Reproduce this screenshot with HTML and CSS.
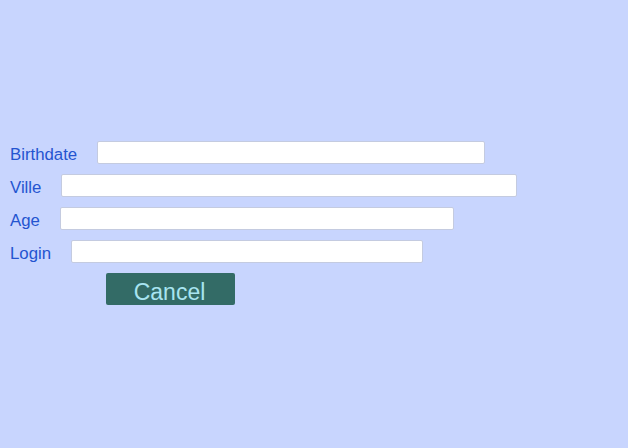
FILE: index.html
```html
<!DOCTYPE html>
<html>
<head>
<meta charset="utf-8">
<link rel="stylesheet" href="styles.css">
</head>
<body>
<form class="form">
  <div class="row"><label class="label">Birthdate</label><input class="field field-birthdate" type="text"></div>
  <div class="row"><label class="label">Ville</label><input class="field field-ville" type="text"></div>
  <div class="row"><label class="label">Age</label><input class="field field-age" type="text"></div>
  <div class="row"><label class="label">Login</label><input class="field field-login" type="text"></div>
  <div class="actions"><button class="btn" type="button">Cancel</button></div>
</form>
</body>
</html>
```
FILE: styles.css
```css
html, body {
  margin: 0;
  padding: 0;
  background: #c8d5fe;
  height: 100%;
}
body {
  font-family: "Liberation Sans", Arial, sans-serif;
}
.form {
  padding: 141px 0 0 10px;
  display: flex;
  flex-direction: column;
  gap: 10px;
}
.row {
  display: flex;
  align-items: center;
  gap: 20px;
  height: 23px;
}
.label {
  font-size: 16.8px;
  color: #2454d0;
  line-height: 23px;
  position: relative;
  top: 2px;
}
.field {
  box-sizing: border-box;
  height: 23px;
  margin: 0;
  padding: 0 4px;
  border: 1px solid #c4cbe0;
  border-radius: 2px;
  background: #fff;
  outline: none;
}
.field-birthdate { width: 388px; }
.field-ville { width: 456px; }
.field-age { width: 394px; }
.field-login { width: 352px; }
.actions {
  padding-left: 96px;
}
.btn {
  box-sizing: border-box;
  width: 129px;
  height: 32px;
  margin: 0;
  padding: 5px 2px 0 0;
  border: none;
  border-radius: 2px;
  background: #336b66;
  color: #a8e4f0;
  font-family: "Liberation Sans", Arial, sans-serif;
  font-size: 23px;
  line-height: 26px;
}
```
